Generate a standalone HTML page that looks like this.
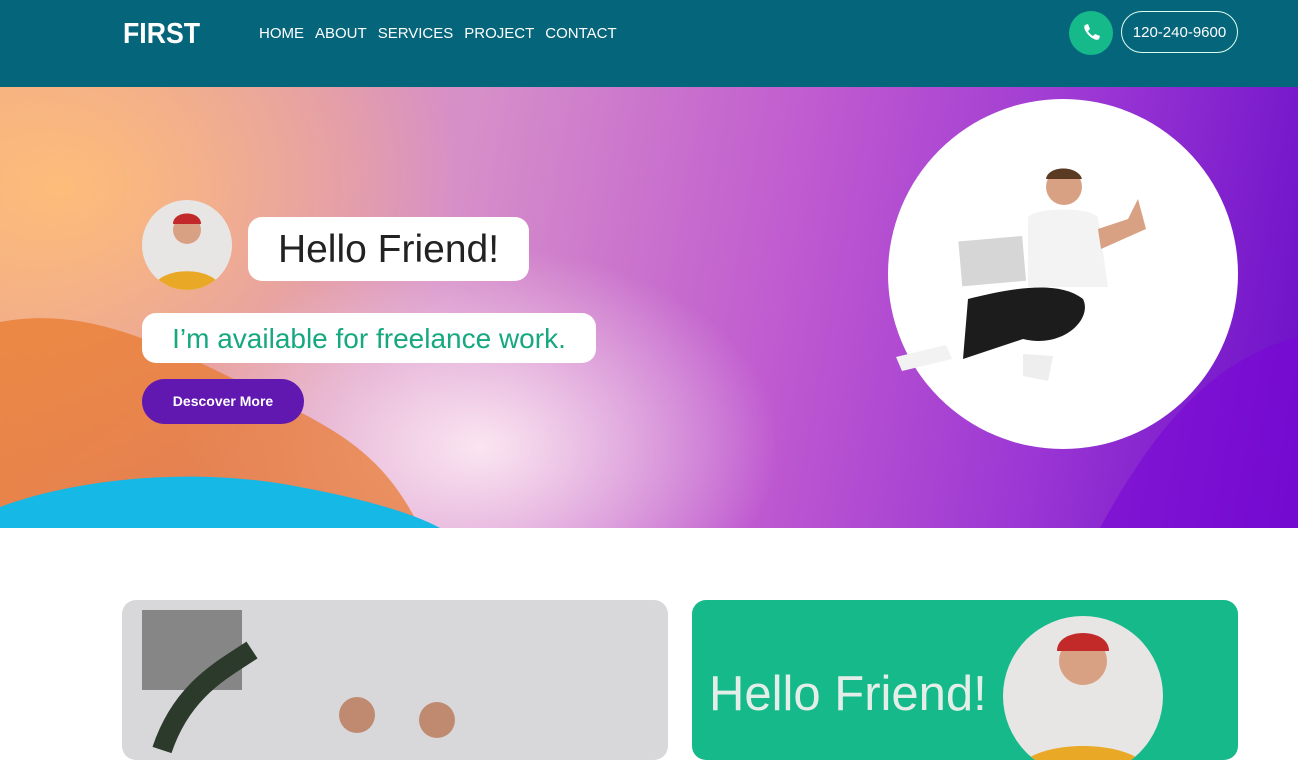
<!DOCTYPE html>
<html><head><meta charset="utf-8"><style>
*{margin:0;padding:0;box-sizing:border-box}
body{width:1298px;height:751px;overflow:hidden;background:#fff;font-family:"Liberation Sans",sans-serif}
.hdr{position:absolute;left:0;top:0;width:1298px;height:87px;background:#05657b;color:#fff}
.logo{position:absolute;left:123px;top:18px;font-size:29px;font-weight:bold;transform:scaleX(.92);transform-origin:left}
.nav{position:absolute;left:259px;top:25px;font-size:15px;white-space:nowrap}
.nav span{margin-right:11px}
.ph{position:absolute;left:1069px;top:11px;width:44px;height:44px;border-radius:50%;background:#16b98a}
.num{position:absolute;left:1121px;top:11px;width:117px;height:42px;border:1px solid #dfe;border-radius:21px;color:#fff;font-size:15px;line-height:42px;text-align:center}
.hero{position:absolute;left:0;top:87px;width:1298px;height:441px;overflow:hidden;
background:
radial-gradient(ellipse 300px 200px at 480px 360px,rgba(255,240,245,.9),transparent),
radial-gradient(ellipse 400px 300px at 60px 100px,rgba(255,190,120,.95),transparent),
linear-gradient(100deg,#e9a38f 0%,#d68fc9 35%,#bf5ad0 60%,#9b36d4 80%,#6a0fc8 100%)}
.circ{position:absolute;left:888px;top:12px;width:350px;height:350px;border-radius:50%;background:#fff}
.av{position:absolute;left:142px;top:113px;width:90px;height:90px;border-radius:50%;background:#e8e6e4;overflow:hidden}
.hello{position:absolute;left:248px;top:130px;width:281px;height:64px;background:#fff;border-radius:14px;font-size:39px;color:#222;text-align:center;line-height:66px}
.free{position:absolute;left:142px;top:226px;width:454px;height:50px;background:#fff;border-radius:14px;font-size:28px;color:#16a87f;text-align:center;line-height:52px}
.btn{position:absolute;left:142px;top:292px;width:162px;height:45px;background:#6118b0;border-radius:23px;color:#fff;font-size:14px;font-weight:bold;text-align:center;line-height:45px}
.c1{position:absolute;left:122px;top:600px;width:546px;height:160px;border-radius:14px;background:#d8d8da;overflow:hidden}
.c2{position:absolute;left:692px;top:600px;width:546px;height:160px;border-radius:14px;background:#16b98a;overflow:hidden}
.c2 .t{position:absolute;left:17px;top:66px;font-size:49px;color:#e4eee9}
.c2 .a{position:absolute;left:311px;top:16px;width:160px;height:160px;border-radius:50%;background:#e8e6e4;overflow:hidden}
</style></head><body>
<div class="hdr"><div class="logo">FIRST</div>
<div class="nav"><span>HOME</span><span>ABOUT</span><span>SERVICES</span><span>PROJECT</span><span>CONTACT</span></div>
<div class="ph"><svg width="44" height="44" viewBox="0 0 44 44"><path d="M16 14l3-1 2 5-2 2c1 2 3 4 5 5l2-2 5 2-1 3c-1 1-3 1-5 0-4-2-7-5-9-9-1-2-1-4 0-5z" fill="#fff"/></svg></div>
<div class="num">120-240-9600</div></div>
<div class="hero">
<svg width="1298" height="441" style="position:absolute;left:0;top:0">
<path d="M0 235 C80 220 150 250 250 300 C330 340 380 360 420 441 L0 441Z" fill="#e8772a" opacity=".7"/>
<path d="M0 441 L0 420 C80 390 200 380 300 400 C380 415 420 430 440 441Z" fill="#16b8e6"/>
<path d="M1100 441 C1160 330 1220 270 1298 250 L1298 441Z" fill="#7a06d6" opacity=".6"/>
</svg>
<div class="circ">
<svg width="350" height="350" viewBox="0 0 350 350">
<circle cx="176" cy="88" r="18" fill="#d9a184"/><path d="M158 80c2-14 32-14 36 0z" fill="#5a3a22"/>
<path d="M140 118c10-10 60-10 70 0l10 70h-80z" fill="#f3f3f3"/>
<rect x="72" y="140" width="64" height="45" fill="#d6d6d6" transform="rotate(-5 100 160)"/>
<path d="M80 200c40-10 90-20 115 0 10 20-20 50-60 40l-60 20z" fill="#1c1c1c"/>
<path d="M8 258l50-12 6 14-50 12z" fill="#f2f2f2"/><path d="M135 255l30 2-5 25-25-5z" fill="#eee"/>
<path d="M210 130l30-10 10-20 8 30-45 20z" fill="#d9a184"/>
</svg></div>
<div class="av"><svg width="90" height="90"><path d="M10 90c5-25 65-25 70 0z" fill="#e9a826"/><circle cx="45" cy="30" r="14" fill="#d9a184"/><path d="M31 24c0-14 28-14 28 0z" fill="#c22a2a"/></svg></div>
<div class="hello">Hello Friend!</div>
<div class="free">I’m available for freelance work.</div>
<div class="btn">Descover More</div>
</div>
<div class="c1"><svg width="546" height="160"><rect x="20" y="10" width="100" height="80" fill="#333" opacity=".5"/><path d="M40 150c20-60 60-80 90-100" stroke="#2b3a2b" stroke-width="20" fill="none"/><circle cx="235" cy="115" r="18" fill="#c08a70"/><circle cx="315" cy="120" r="18" fill="#c08a70"/></svg></div>
<div class="c2"><div class="t">Hello Friend!</div><div class="a"><svg width="160" height="160"><path d="M10 160c10-40 130-40 140 0z" fill="#e9a826"/><circle cx="80" cy="45" r="24" fill="#d9a184"/><path d="M54 35c0-24 52-24 52 0z" fill="#c22a2a"/></svg></div></div>
</body></html>
